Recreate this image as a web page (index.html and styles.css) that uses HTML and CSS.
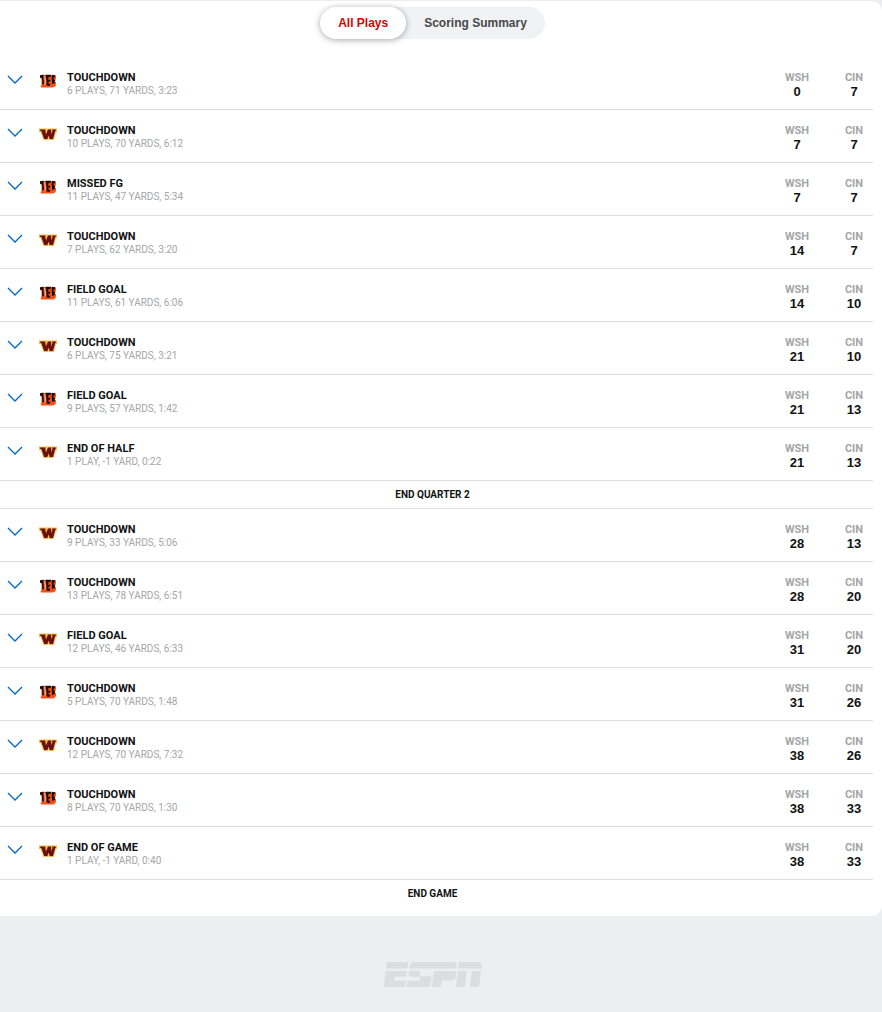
FILE: index.html
```html
<!DOCTYPE html>
<html lang="en">
<head>
    <meta charset="UTF-8">
    <meta name="viewport" content="width=device-width, initial-scale=1.0">
    <title>Play-by-Play</title>
    <link rel="stylesheet" href="styles.css">
</head>
<body>
    <!-- shared icons -->
    <svg class="sprite" aria-hidden="true">
        <symbol id="chevron" viewBox="0 0 16 10">
            <path d="M1 1 L8 8 L15 1" fill="none" stroke="#06c" stroke-width="1.3"/>
        </symbol>
        <symbol id="cin" viewBox="0 0 18 16">
            <path d="M1 2 H15 Q17.500 2 17 5 Q16.800 7 15.500 8 Q17.500 9 17 11.500 Q16.500 14.500 13 14.500 H2 Q1 13 2.500 12 V5.500 L1 5 Z" fill="#fb4f14"/>
            <path d="M1 2.500 L4.500 1.500 Q4.200 6 5 11 L3.200 11.500 Q3.500 8 2.800 5 L1 4.500 Z" fill="#111"/>
            <path d="M6.500 1.800 H12 L11.500 4.200 L9.500 3.800 L9.200 7 L11.200 6.500 V8.500 L9.300 8.800 L9.800 11 L11.500 10.500 L10.500 13 L7.500 12.500 Q8 8 6.500 1.800 Z" fill="#111"/>
            <path d="M13 1.800 L16.500 2.500 Q14.800 4.500 14.500 6.500 L16.500 7 L15.500 8.500 L16.500 10 Q14.500 9.500 13.300 11.500 Q12.300 6 13 1.800 Z" fill="#111"/>
            <path d="M5.700 3 Q6.600 8 6.200 11.500" fill="none" stroke="#fff" stroke-width=".6"/>
        </symbol>
        <symbol id="wsh" viewBox="0 0 18 16">
            <path d="M0 2.500 H18 V6 H17 L14.800 14 H10 L9.500 12.500 L9 14 H4.500 L1.500 6 H0 Z" fill="#f5bb45"/>
            <path d="M1.200 3.500 H6.300 V5 L7 8.500 L9 3.500 H12 L12.500 8.500 L13.500 5 L13 3.500 H16.800 V5 H16.200 L14 13 H10.700 L9.700 9.500 L8.300 13 H5.200 L2.300 5 H1.200 Z" fill="#6b1010"/>
        </symbol>
    </svg>

    <main class="card">
        <div class="toggle">
            <button type="button" class="toggle-btn active">All Plays</button>
            <button type="button" class="toggle-btn">Scoring Summary</button>
        </div>
        <div class="drives" id="drives"></div>
    </main>

    <footer class="footer">
        <svg class="espn" viewBox="0 0 300 76" role="img" aria-label="ESPN">
            <path d="M10 0 H75 L72 20 H7 Z"/>
            <path d="M94 0 H210 Q224 0 222 13 L221 20 H78 L79 13 Q81 0 94 0 Z"/>
            <path d="M229 0 H284 Q299 0 298 13 L297 20 H226 Z"/>
            <path d="M6 27 H71 L69 45 H33 L31 57 H67 L65 76 H0 Z"/>
            <path d="M77 27 H111 L110 43 H146 L143 65 Q141 76 130 76 H70 L72 57 H109 L110 45 H87 Q75 45 76 35 Z"/>
            <path d="M153 27 H220 L219 45 Q217 56 206 56 H177 L174 76 H146 Z"/>
            <path d="M225 27 H253 L247 76 H219 Z"/>
            <path d="M268 27 H296 L290 76 H262 Z"/>
        </svg>
    </footer>

    <script src="script.js"></script>
</body>
</html>
```
FILE: styles.css
```css
* {
    box-sizing: border-box;
}
body {
    margin: 0;
    background-color: #edeef0;
    font-family: Roboto, "Liberation Sans", sans-serif;
    color: #121213;
}
.sprite {
    display: none;
}
.card {
    margin-top: 1px;
    padding: 6px 9px 8px 0;
    background-color: #fff;
    border-radius: 0 10px 10px 0;
}
.toggle {
    display: flex;
    justify-content: center;
    padding-right: 8px;
}
.toggle-btn {
    height: 32px;
    padding: 0 18px;
    border: 0;
    border-radius: 0 16px 16px 0;
    background-color: #f1f2f3;
    font-family: "Liberation Sans", sans-serif;
    font-size: 12px;
    font-weight: 700;
    color: #48494a;
    cursor: pointer;
}
.toggle-btn.active {
    z-index: 1;
    border-radius: 16px;
    background-color: #fff;
    color: #d00;
    box-shadow: 0 1px 6px rgba(0, 0, 0, 0.35);
}
/* grey track runs on under the selected pill */
.toggle-btn:last-child {
    margin-left: -16px;
    padding-left: 34px;
}
.drives {
    margin-top: 18px;
}
.drive {
    display: flex;
    align-items: flex-start;
    height: 53px;
    padding-top: 14px;
    border-bottom: 1px solid #dcdddf;
}
.expand {
    width: 32px;
    height: 20px;
    padding: 4px 0 6px 7px;
    border: 0;
    background: none;
    cursor: pointer;
}
.chevron {
    display: block;
    width: 16px;
    height: 10px;
}
.logo {
    width: 18px;
    height: 16px;
    margin: 2px 10px 0 7px;
}
.info {
    flex: 1;
}
.headline {
    font-size: 11px;
    line-height: 14px;
    font-weight: 700;
}
.summary {
    font-size: 10px;
    line-height: 12px;
    color: #a5a6a7;
}
.team {
    width: 38px;
    margin-left: 19px;
    text-align: center;
    font-size: 11px;
    line-height: 14px;
    font-weight: 700;
    color: #a5a6a7;
}
.score {
    font-family: "Liberation Sans", sans-serif;
    font-size: 13px;
    color: #121213;
}
.period {
    height: 28px;
    padding-right: 8px;
    border-bottom: 1px solid #dcdddf;
    text-align: center;
    font-size: 10px;
    line-height: 28px;
    font-weight: 700;
}
.period:last-child {
    border-bottom: 0;
}
.footer {
    padding: 46px 17px 25px 0;
    text-align: center;
}
.espn {
    display: inline-block;
    width: 100px;
    height: 25px;
    fill: #dcdddf;
}
```
FILE: script.js
```js
const drives = [
    ['cin', 'TOUCHDOWN', '6 PLAYS, 71 YARDS, 3:23', 0, 7],
    ['wsh', 'TOUCHDOWN', '10 PLAYS, 70 YARDS, 6:12', 7, 7],
    ['cin', 'MISSED FG', '11 PLAYS, 47 YARDS, 5:34', 7, 7],
    ['wsh', 'TOUCHDOWN', '7 PLAYS, 62 YARDS, 3:20', 14, 7],
    ['cin', 'FIELD GOAL', '11 PLAYS, 61 YARDS, 6:06', 14, 10],
    ['wsh', 'TOUCHDOWN', '6 PLAYS, 75 YARDS, 3:21', 21, 10],
    ['cin', 'FIELD GOAL', '9 PLAYS, 57 YARDS, 1:42', 21, 13],
    ['wsh', 'END OF HALF', '1 PLAY, -1 YARD, 0:22', 21, 13],
    'END QUARTER 2',
    ['wsh', 'TOUCHDOWN', '9 PLAYS, 33 YARDS, 5:06', 28, 13],
    ['cin', 'TOUCHDOWN', '13 PLAYS, 78 YARDS, 6:51', 28, 20],
    ['wsh', 'FIELD GOAL', '12 PLAYS, 46 YARDS, 6:33', 31, 20],
    ['cin', 'TOUCHDOWN', '5 PLAYS, 70 YARDS, 1:48', 31, 26],
    ['wsh', 'TOUCHDOWN', '12 PLAYS, 70 YARDS, 7:32', 38, 26],
    ['cin', 'TOUCHDOWN', '8 PLAYS, 70 YARDS, 1:30', 38, 33],
    ['wsh', 'END OF GAME', '1 PLAY, -1 YARD, 0:40', 38, 33],
    'END GAME'
];

document.getElementById('drives').innerHTML = drives.map(drive => {
    if (typeof drive === 'string') {
        return `<div class="period">${drive}</div>`;
    }
    const [team, headline, summary, wsh, cin] = drive;
    return `
        <div class="drive">
            <button type="button" class="expand" aria-label="Show plays">
                <svg class="chevron"><use href="#chevron"/></svg>
            </button>
            <svg class="logo"><use href="#${team}"/></svg>
            <div class="info">
                <div class="headline">${headline}</div>
                <div class="summary">${summary}</div>
            </div>
            <div class="team">WSH<div class="score">${wsh}</div></div>
            <div class="team">CIN<div class="score">${cin}</div></div>
        </div>`;
}).join('');
```
